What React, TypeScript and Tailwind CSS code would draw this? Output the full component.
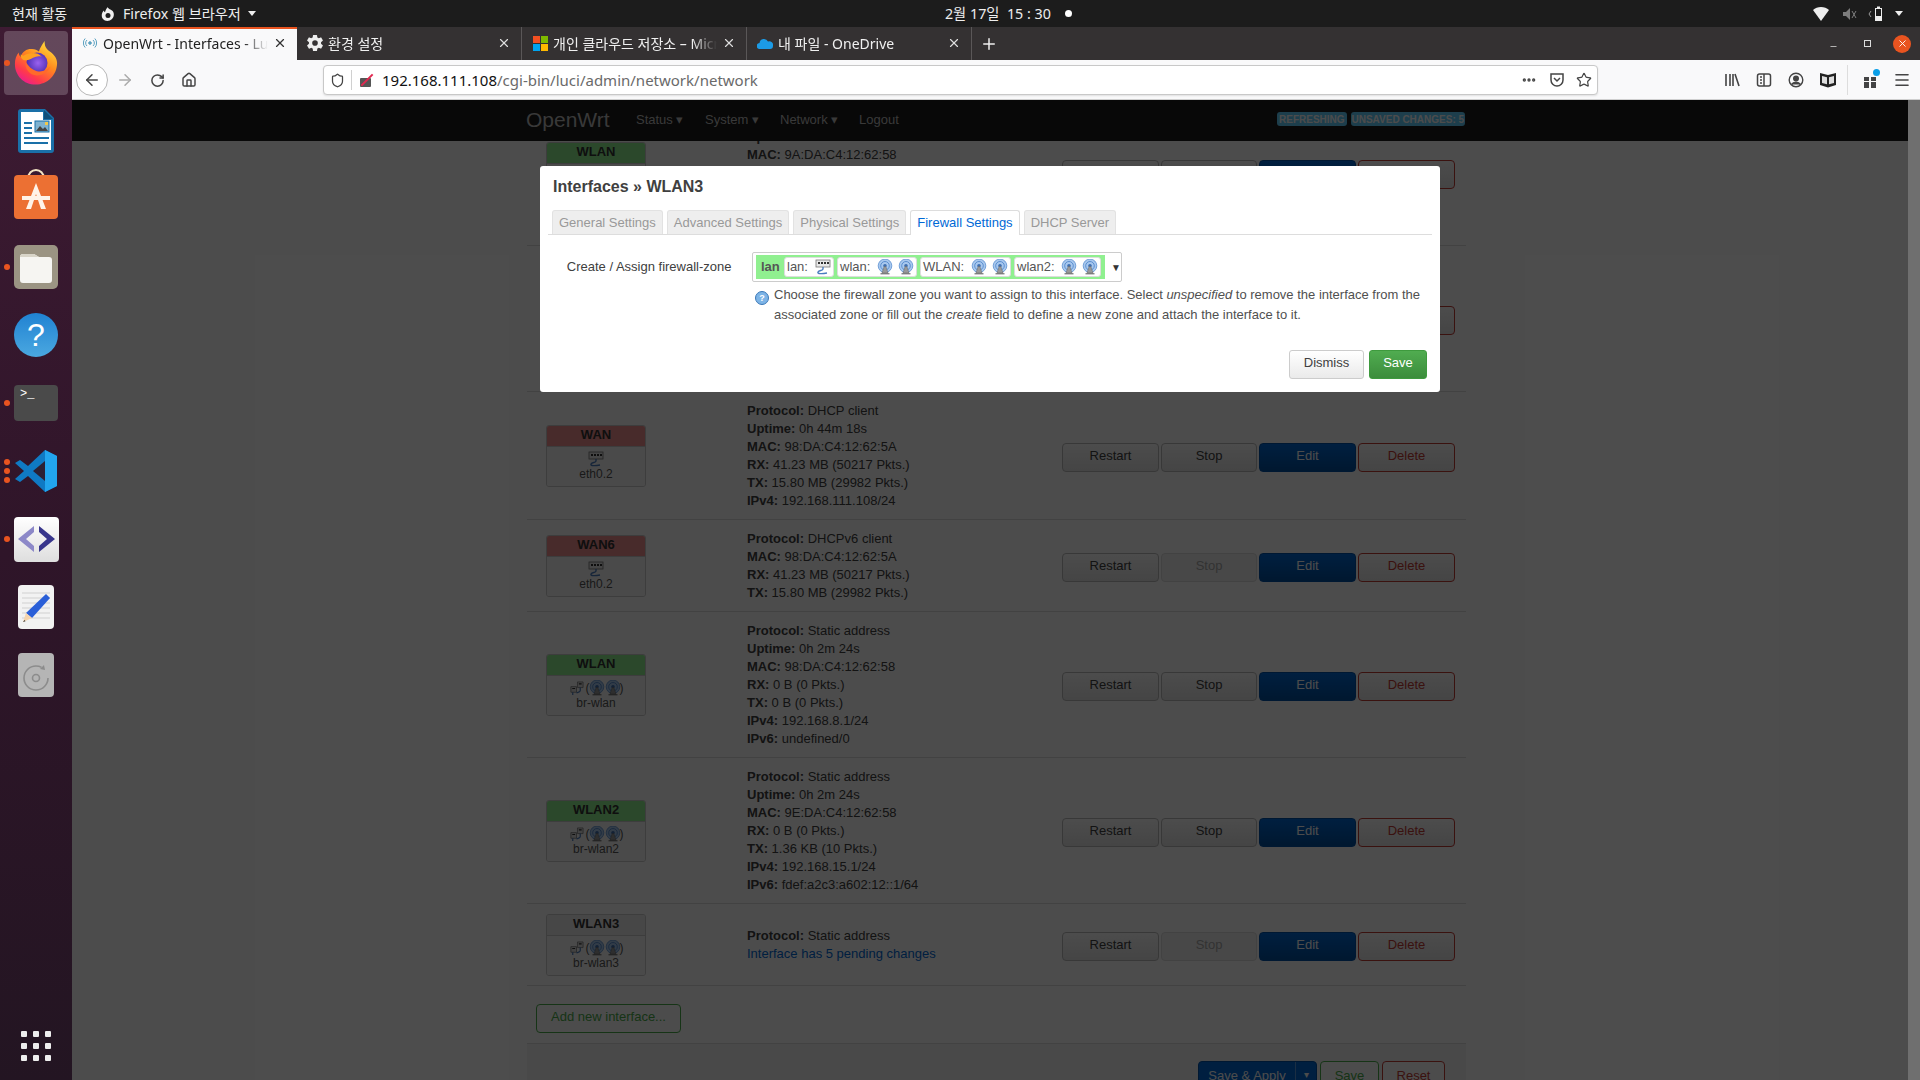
import React from 'react';
import {
  ArrowLeft,
  ArrowRight,
  RotateCw,
  House,
  Shield,
  Star,
  Ellipsis,
  Menu,
  X,
  Plus,
  Minus,
} from 'lucide-react';
import { IoSettingsSharp } from 'react-icons/io5';

const chromeFont = 'font-["Noto_Sans","Noto_Sans_CJK_KR",sans-serif]';

/* ---------- small LuCI icons ---------- */
const EthIcon = () => (
  <svg width="16" height="16" viewBox="0 0 16 16" className="shrink-0">
    <rect x="1" y="1" width="14" height="7" fill="#e8e8e8" stroke="#777" strokeWidth="0.8" />
    <path d="M3 3h2v2H3zM6 3h2v2H6zM9 3h2v2H9zM12 3h2v2h-2z" fill="#333" />
    <path d="M8 8v2c0 2-4 1-5 3s4 2 9 1" fill="none" stroke="#4a7cc0" strokeWidth="1.4" />
  </svg>
);

const WifiIcon = () => (
  <svg width="16" height="16" viewBox="0 0 16 16" className="shrink-0">
    <circle cx="8" cy="6.8" r="6.800" fill="#a8c8ee" stroke="#5b8fd0" strokeWidth="0.8" />
    <circle cx="8" cy="6.800" r="4.300" fill="none" stroke="#5b8fd0" strokeWidth="1" />
    <circle cx="8" cy="6.800" r="1.800" fill="#3f6fb0" />
    <path d="M7.200 7.500L5 14h6L8.800 7.500z" fill="#999" stroke="#666" strokeWidth="0.5" />
    <path d="M3.500 14.800h9" stroke="#555" strokeWidth="1" />
  </svg>
);

const BridgeIcon = () => (
  <svg width="15" height="15" viewBox="0 0 16 16" className="shrink-0">
    <path d="M9 1h6v6H9z" fill="#ddd" stroke="#777" strokeWidth="0.8" />
    <path d="M2 6h6v6H2z" fill="#ddd" stroke="#777" strokeWidth="0.8" />
    <path d="M4 12v3M12 7v3c0 2-3 2-4 3" fill="none" stroke="#4a7cc0" strokeWidth="1.3" />
    <path d="M10.500 3h3M3.500 8h3" stroke="#333" strokeWidth="1.2" />
  </svg>
);

/* ---------- dock icons ---------- */
const FirefoxIcon = () => (
  <svg width="46" height="46" viewBox="0 0 48 48">
    <defs>
      <linearGradient id="ffa" x1="0.8" y1="0.05" x2="0.2" y2="1">
        <stop offset="0" stopColor="#ffdb3a" />
        <stop offset="0.4" stopColor="#ff8a1e" />
        <stop offset="0.75" stopColor="#ff3a4a" />
        <stop offset="1" stopColor="#e8189a" />
      </linearGradient>
      <radialGradient id="ffb" cx="0.55" cy="0.5" r="0.55">
        <stop offset="0" stopColor="#9a62f0" />
        <stop offset="1" stopColor="#4b2db0" />
      </radialGradient>
    </defs>
    <path
      d="M46 24c0 12.500-10 22.500-22.500 22.500C11 46.500 2 37 2 25 2 20 3.500 16 6 13c0 2 .8 3.500 2 4.500C10 11.500 15 9 20 9.500c3 .3 5 1 7 2.500C28 8 31 4 33 1c0 5 1 7 4 10 5 3.500 9 7.500 9 13z"
      fill="url(#ffa)"
    />
    <circle cx="25" cy="24" r="11" fill="url(#ffb)" />
    <path d="M8 15c0 4 2 6 5 6 3 .3 5-1 8-2.500 3-1.500 6-2 9-1-3-3-6-4-10-3.800-4 .3-7 1-9 2.800z" fill="#ffa01f" />
    <path d="M13 22c-1 8 4 15 12 15 6 0 11-3 14-9-4 4-9 5.500-14 4.500-5-1-9-5-12-10.500z" fill="#ff6a2a" />
  </svg>
);

const WriterIcon = () => (
  <svg width="36" height="44" viewBox="0 0 36 44">
    <path d="M3 0h24l9 9v32a3 3 0 0 1-3 3H3a3 3 0 0 1-3-3V3a3 3 0 0 1 3-3z" fill="#1a70a8" />
    <path d="M3 3h22v8h8v30H3z" fill="#fff" />
    <path d="M26 1l9 9h-9z" fill="#0f4f7a" />
    <path d="M6 13h8v2H6zM6 18h8v2H6zM6 23h8v2H6zM6 28h25v2H6zM6 33h24v2H6z" fill="#1a70a8" />
    <rect x="17" y="12" width="14" height="11" fill="#7fb2d0" stroke="#1a70a8" />
    <path d="M18 22l4-5 3 3 2-2 3 4z" fill="#444" />
    <rect x="27" y="13" width="3" height="3" fill="#f2c94c" />
  </svg>
);

const StoreIcon = () => (
  <svg width="44" height="52" viewBox="0 0 44 52" className="-mt-[12px]">
    <path d="M14 12c0-12 16-12 16 0" fill="none" stroke="#f3e4c4" strokeWidth="2" />
    <rect x="0" y="8" width="44" height="44" rx="4" fill="#ec7033" />
    <path d="M22 16l-10 26h5l5-15 5 15h5z" fill="#fff3e8" />
    <rect x="8" y="29" width="28" height="4" fill="#fff3e8" />
  </svg>
);

const FilesIcon = () => (
  <svg width="44" height="44" viewBox="0 0 44 44">
    <rect width="44" height="44" rx="5" fill="#9b9483" />
    <path d="M6 12a3 3 0 0 1 3-3h11l5 3h10a3 3 0 0 1 3 3v20a3 3 0 0 1-3 3H9a3 3 0 0 1-3-3z" fill="#f6f5f2" />
    <path d="M6 12a3 3 0 0 1 3-3h11l5 3z" fill="#d8d4c8" />
  </svg>
);

const HelpIcon = () => (
  <div className="flex h-[44px] w-[44px] items-center justify-center rounded-full bg-gradient-to-b from-[#1f82d2] to-[#4aa8e0] font-['Liberation_Sans',sans-serif] text-[32px] text-white">
    ?
  </div>
);

const TerminalIcon = () => (
  <div className="relative h-[36px] w-[44px] rounded-[4px] bg-[#4a4a4a]">
    <span className="absolute left-[6px] top-[1px] font-['Liberation_Mono',monospace] text-[12px] leading-[16px] text-white">
      &gt;_
    </span>
  </div>
);

const VSCodeIcon = () => (
  <svg width="42" height="42" viewBox="0 0 42 42">
    <path d="M30 0l12 6v30l-12 6-17-16-8 6-5-3 9-8-9-8 5-3 8 6z" fill="#0f7ac4" />
    <path d="M30 0l12 6v30l-12 6z" fill="#22a5ee" />
    <path d="M30 11v20l-12-10z" fill="#2c2033" />
  </svg>
);

const CodeTileIcon = () => (
  <div className="flex h-[45px] w-[45px] items-center justify-center rounded-[4px] bg-gradient-to-b from-white to-[#dedede]">
    <svg width="37" height="26" viewBox="0 0 37 26">
      <path d="M16 0L0 13l16 13v-6L8 13l8-7z" fill="#8c88c8" />
      <path d="M21 0l16 13-16 13v-6l8-7-8-7z" fill="#38368c" />
    </svg>
  </div>
);

const EditIcon = () => (
  <svg width="36" height="44" viewBox="0 0 36 44">
    <rect width="36" height="44" rx="4" fill="#f2f2f2" />
    <path d="M4 8h28M4 13h28M4 18h28M4 23h28M4 28h28M4 33h28" stroke="#d0d0d0" strokeWidth="1" />
    <path d="M28 9l4 4-18 20-6-5z" fill="#2a5fd8" />
    <path d="M8 28l6 5-9 4z" fill="#f4d4ae" />
    <path d="M6.500 35l-1.500 2 2.500-.8z" fill="#333" />
  </svg>
);

const DiskIcon = () => (
  <svg width="36" height="44" viewBox="0 0 36 44">
    <rect width="36" height="44" rx="4" fill="#b5b5b5" />
    <circle cx="18" cy="25" r="12" fill="none" stroke="#8c8c8c" strokeWidth="1.6" strokeDasharray="62 14" />
    <circle cx="18" cy="25" r="3.500" fill="none" stroke="#8c8c8c" strokeWidth="1.6" />
    <path d="M26 12l1 5-5-1z" fill="#8c8c8c" />
  </svg>
);

const dockItems = [
  { icon: <FirefoxIcon />, dots: 1, active: true },
  { icon: <WriterIcon />, dots: 0 },
  { icon: <StoreIcon />, dots: 0 },
  { icon: <FilesIcon />, dots: 1 },
  { icon: <HelpIcon />, dots: 0 },
  { icon: <TerminalIcon />, dots: 1 },
  { icon: <VSCodeIcon />, dots: 3 },
  { icon: <CodeTileIcon />, dots: 1 },
  { icon: <EditIcon />, dots: 0 },
  { icon: <DiskIcon />, dots: 0 },
];

const Dock = () => (
  <aside className="flex w-[72px] shrink-0 flex-col bg-gradient-to-b from-[#3e1b33] via-[#2f1529] to-[#231522] pt-[2px]">
    {dockItems.map((item, i) => (
      <div key={i} className="relative flex h-[68px] items-center justify-center">
        {item.active && <div className="absolute inset-x-[4px] inset-y-[2px] rounded-[4px] bg-white/20" />}
        <div className="relative flex items-center justify-center">{item.icon}</div>
        {item.dots > 0 && (
          <div className="absolute left-[4px] top-0 flex h-full flex-col justify-center gap-[3px]">
            {Array.from({ length: item.dots }).map((_, d) => (
              <span key={d} className="h-[6px] w-[6px] rounded-full bg-[#e95420]" />
            ))}
          </div>
        )}
      </div>
    ))}
    <div className="mt-auto mb-[19px] ml-[21px] grid w-[30px] grid-cols-3 gap-[6px]">
      {Array.from({ length: 9 }).map((_, i) => (
        <span key={i} className="h-[6px] w-[6px] rounded-[1px] bg-[#eeeeee]" />
      ))}
    </div>
  </aside>
);

/* ---------- gnome top bar ---------- */
const TopBar = () => (
  <header className={`flex h-[27px] items-center bg-[#1c1c1c] text-[14px] text-[#eeeeee] ${chromeFont}`}>
    <span className="ml-[12px] w-[88px]">현재 활동</span>
    <svg width="16" height="16" viewBox="0 0 16 16" className="mr-[7px]">
      <path d="M8 1c-.5 1.500 2 2 4 3.500 2.500 2 2.500 6 0 8.500S5 15.500 3 13 1.500 6.500 4 4.500c0 1 .5 1.500 1 1.800C5.500 4 6.500 2 8 1z" fill="#eee" />
      <circle cx="8" cy="9.500" r="2.500" fill="#1c1c1c" />
    </svg>
    <span className="text-[14.200px]">Firefox 웹 브라우저</span>
    <span className="ml-[7px] h-0 w-0 border-x-[4px] border-t-[5px] border-x-transparent border-t-[#eeeeee]" />
    <div className="ml-[689px] flex items-center">
      <span className="text-[14.300px]">2월 17일&nbsp;&nbsp;15 : 30</span>
      <span className="ml-[14px] h-[7px] w-[7px] rounded-full bg-white" />
    </div>
    <div className="ml-auto mr-[17px] flex items-center">
      <svg width="16" height="16" viewBox="0 0 16 16">
        <path d="M0 4c4-4 12-4 16 0L8 15z" fill="#eee" />
      </svg>
      <svg width="16" height="16" viewBox="0 0 16 16" className="ml-[12px] opacity-50">
        <path d="M2 6h3l4-4v12l-4-4H2z" fill="#ddd" />
        <path d="M11 5l4 7M11 12l4-7" stroke="#ddd" strokeWidth="1" />
      </svg>
      <svg width="20" height="16" viewBox="0 0 20 16" className="ml-[11px]">
        <path d="M3 5l-2 3 2 3" fill="none" stroke="#999" strokeWidth="1" />
        <rect x="7" y="2" width="7" height="13" fill="#eee" />
        <rect x="9" y="0.500" width="3" height="2" fill="#eee" />
        <rect x="8" y="3" width="5" height="7" fill="#1c1c1c" />
      </svg>
      <span className="ml-[7px] h-0 w-0 border-x-[4px] border-t-[5px] border-x-transparent border-t-[#eeeeee]" />
    </div>
  </header>
);

/* ---------- firefox chrome ---------- */
const OpenWrtFavicon = () => (
  <svg width="14" height="14" viewBox="0 0 14 14" fill="none" stroke="#5aa0c0" strokeWidth="1">
    <circle cx="7" cy="7" r="1.300" fill="#5aa0c0" />
    <path d="M4 4a4 4 0 0 0 0 6M10 4a4 4 0 0 1 0 6M2.200 2.500a6.500 6.500 0 0 0 0 9M11.800 2.500a6.500 6.500 0 0 1 0 9" />
  </svg>
);

const MsLogo = () => (
  <span className="grid h-[15px] w-[15px] shrink-0 grid-cols-2 gap-[1px]">
    <span className="bg-[#f25022]" />
    <span className="bg-[#7fba00]" />
    <span className="bg-[#00a4ef]" />
    <span className="bg-[#ffb900]" />
  </span>
);

const OneDriveLogo = () => (
  <svg width="16" height="11" viewBox="0 0 16 11" className="shrink-0">
    <path d="M3 11a3 3 0 0 1-.5-6A4.500 4.500 0 0 1 11 3.500 3.800 3.800 0 0 1 16 8c0 2-1 3-3 3z" fill="#1c9be6" />
  </svg>
);

const tabs = [
  { title: 'OpenWrt - Interfaces - LuCI', icon: <OpenWrtFavicon />, active: true },
  { title: '환경 설정', icon: <IoSettingsSharp size={18} className="shrink-0 text-[#eee]" /> },
  { title: '개인 클라우드 저장소 – Microsoft', icon: <MsLogo /> },
  { title: '내 파일 - OneDrive', icon: <OneDriveLogo /> },
];

const TabStrip = () => (
  <div className={`flex h-[33px] items-stretch bg-[#343132] text-[14px] text-[#f0f0f0] ${chromeFont}`}>
    {tabs.map((t) => (
      <div
        key={t.title}
        className={`flex w-[225px] items-center gap-[5px] pl-[10px] pr-[10px] ${
          t.active ? 'border-t-2 border-[#e95420] bg-[#f9f9fa] pb-[3px] text-[#222222]' : 'border-r border-[#5a5758] pb-[1px]'
        }`}
      >
        <span className="flex w-[16px] shrink-0 justify-center">{t.icon}</span>
        <span className="min-w-0 flex-1 overflow-hidden whitespace-nowrap [mask-image:linear-gradient(to_right,black_85%,transparent)]">
          {t.title}
        </span>
        <X size={14} className={t.active ? 'text-[#333]' : 'text-[#ddd]'} />
      </div>
    ))}
    <div className="flex w-[34px] items-center justify-center">
      <Plus size={18} className="text-[#eee]" />
    </div>
    <div className="ml-auto mr-[9px] flex items-center">
      <Minus size={9} className="mr-[26px] mt-[6px] text-[#ddd]" />
      <span className="relative mr-[22px] h-[7px] w-[7px] border border-[#ddd]" />
      <span className="flex h-[18px] w-[18px] items-center justify-center rounded-full bg-[#e95420]">
        <X size={11} className="text-white" />
      </span>
    </div>
  </div>
);

const Toolbar = () => (
  <div className={`flex h-[40px] items-center border-b border-[#cfcfcf] bg-[#f9f9fa] pt-[1px] text-[#444] ${chromeFont}`}>
    <div className="ml-[4px] flex h-[32px] w-[32px] items-center justify-center rounded-full border border-[#b8b8b8] bg-white">
      <ArrowLeft size={18} />
    </div>
    <div className="ml-[1px] flex w-[32px] justify-center text-[#aaaaaa]">
      <ArrowRight size={18} />
    </div>
    <div className="flex w-[32px] justify-center">
      <RotateCw size={15} strokeWidth={2.4} />
    </div>
    <div className="flex w-[32px] justify-center">
      <House size={16} strokeWidth={2.2} />
    </div>
    <div className="ml-[118px] flex h-[30px] w-[1275px] items-center rounded-[4px] border border-[#c8c8c8] bg-white shadow-[0_1px_2px_rgba(0,0,0,0.1)]">
      <Shield size={15} className="ml-[6px] shrink-0" strokeWidth={2} />
      <span className="ml-[6px] h-[20px] w-px bg-[#d0d0d0]" />
      <span className="relative ml-[8px] h-[14px] w-[13px]">
        <span className="absolute bottom-0 h-[9px] w-[11px] rounded-[1px] bg-[#555]" />
        <span className="absolute left-[-1px] top-[6px] h-[2px] w-[16px] -rotate-45 bg-[#e22850]" />
      </span>
      <span className="ml-[9px] whitespace-nowrap text-[15px] text-[#111111]">
        192.168.111.108<span className="text-[#6a6a6a]">/cgi-bin/luci/admin/network/network</span>
      </span>
      <Ellipsis size={16} className="ml-auto text-[#444]" strokeWidth={3} />
      <svg width="16" height="16" viewBox="0 0 16 16" className="ml-[12px]" fill="none" stroke="#444" strokeWidth="1.5">
        <path d="M2 2h12v6a6 6 0 0 1-12 0z" />
        <path d="M5 6l3 3 3-3" />
      </svg>
      <Star size={16} className="ml-[11px] mr-[5px] text-[#444]" strokeWidth={1.8} />
    </div>
    <div className="ml-[126px] flex items-center gap-[16px]">
      <svg width="16" height="16" viewBox="0 0 16 16" stroke="#444" strokeWidth="1.6" fill="none">
        <path d="M2 2v12M6 2v12M9 2v12M11 2l4 12" />
      </svg>
      <svg width="16" height="16" viewBox="0 0 16 16" stroke="#444" strokeWidth="1.5" fill="none">
        <rect x="1.500" y="2" width="13" height="12" rx="2" />
        <path d="M4 5h2M4 8h2M4 11h2M8 2v12" />
      </svg>
      <svg width="16" height="16" viewBox="0 0 16 16" stroke="#444" strokeWidth="1.4" fill="none">
        <circle cx="8" cy="8" r="6.800" />
        <circle cx="8" cy="6.500" r="2.300" fill="#444" />
        <path d="M3.500 12.500c2-3 7-3 9 0" fill="#444" />
      </svg>
      <svg width="16" height="16" viewBox="0 0 16 16">
        <path d="M0 1l8 2 8-2v12l-8 2.500L0 13z" fill="#222" />
        <path d="M2 4l5 1.300v7L2 11zM14 4l-5 1.300v7l5-1.300z" fill="#ddd" />
      </svg>
    </div>
    <span className="ml-[11px] h-[30px] w-px bg-[#dddddd]" />
    <div className="relative ml-[14px]">
      <svg width="16" height="16" viewBox="0 0 16 16" fill="#444">
        <rect x="2" y="5" width="5" height="4" />
        <rect x="9" y="5" width="5" height="4" />
        <rect x="2" y="10" width="5" height="6" />
        <rect x="9" y="10" width="5" height="6" />
      </svg>
      <span className="absolute right-[-2px] top-[-3px] h-[7px] w-[7px] rounded-full bg-[#0a9fe8]" />
    </div>
    <Menu size={18} className="ml-[15px] text-[#444]" strokeWidth={2.2} />
  </div>
);

/* ---------- LuCI page ---------- */
type Row = {
  name: string;
  color: string;
  dev: string;
  kind: 'eth' | 'bridge';
  stopDisabled?: boolean;
  info: [string, string][];
  pending?: boolean;
};

const rows: Row[] = [
  {
    name: 'WLAN',
    color: 'bg-[#90f090]',
    dev: 'br-lan',
    kind: 'bridge',
    info: [
      ['Protocol', 'Static address'],
      ['Uptime', '0h 2m 24s'],
      ['MAC', '9A:DA:C4:12:62:58'],
      ['RX', '0 B (0 Pkts.)'],
      ['TX', '0 B (0 Pkts.)'],
      ['IPv4', '192.168.1.1/24'],
      ['IPv6', 'undefined/0'],
    ],
  },
  {
    name: 'LAN',
    color: 'bg-[#90f090]',
    dev: 'br-lan',
    kind: 'bridge',
    info: [
      ['Protocol', 'Static address'],
      ['Uptime', '0h 44m 20s'],
      ['MAC', '98:DA:C4:12:62:58'],
      ['RX', '0 B (0 Pkts.)'],
      ['TX', '0 B (0 Pkts.)'],
      ['IPv4', '192.168.1.1/24'],
      ['IPv6', 'undefined/0'],
    ],
  },
  {
    name: 'WAN',
    color: 'bg-[#f09090]',
    dev: 'eth0.2',
    kind: 'eth',
    info: [
      ['Protocol', 'DHCP client'],
      ['Uptime', '0h 44m 18s'],
      ['MAC', '98:DA:C4:12:62:5A'],
      ['RX', '41.23 MB (50217 Pkts.)'],
      ['TX', '15.80 MB (29982 Pkts.)'],
      ['IPv4', '192.168.111.108/24'],
    ],
  },
  {
    name: 'WAN6',
    color: 'bg-[#f09090]',
    dev: 'eth0.2',
    kind: 'eth',
    stopDisabled: true,
    info: [
      ['Protocol', 'DHCPv6 client'],
      ['MAC', '98:DA:C4:12:62:5A'],
      ['RX', '41.23 MB (50217 Pkts.)'],
      ['TX', '15.80 MB (29982 Pkts.)'],
    ],
  },
  {
    name: 'WLAN',
    color: 'bg-[#90f090]',
    dev: 'br-wlan',
    kind: 'bridge',
    info: [
      ['Protocol', 'Static address'],
      ['Uptime', '0h 2m 24s'],
      ['MAC', '98:DA:C4:12:62:58'],
      ['RX', '0 B (0 Pkts.)'],
      ['TX', '0 B (0 Pkts.)'],
      ['IPv4', '192.168.8.1/24'],
      ['IPv6', 'undefined/0'],
    ],
  },
  {
    name: 'WLAN2',
    color: 'bg-[#90f090]',
    dev: 'br-wlan2',
    kind: 'bridge',
    info: [
      ['Protocol', 'Static address'],
      ['Uptime', '0h 2m 24s'],
      ['MAC', '9E:DA:C4:12:62:58'],
      ['RX', '0 B (0 Pkts.)'],
      ['TX', '1.36 KB (10 Pkts.)'],
      ['IPv4', '192.168.15.1/24'],
      ['IPv6', 'fdef:a2c3:a602:12::1/64'],
    ],
  },
  {
    name: 'WLAN3',
    color: 'bg-[#eeeeee]',
    dev: 'br-wlan3',
    kind: 'bridge',
    stopDisabled: true,
    pending: true,
    info: [['Protocol', 'Static address']],
  },
];

const RowButton = ({
  label,
  className,
  w = 'w-[97px]',
}: {
  label: string;
  className: string;
  w?: string;
}) => (
  <div className={`flex h-[29px] items-center justify-center rounded-[4px] border pb-[4px] ${w} ${className}`}>
    {label}
  </div>
);

const greyBtn = 'border-[#bbbbbb] bg-gradient-to-b from-white to-[#e6e6e6] text-[#404040]';

const InterfaceRow = ({ row }: { row: Row }) => (
  <div className="flex items-center border-b border-[#dddddd] pb-[9px] pl-[19px] pt-[10px]">
    <div className="flex h-[62px] w-[100px] shrink-0 flex-col overflow-hidden rounded-[3px] border border-[#cccccc] text-center">
      <div className={`h-[21px] border-b border-[#cccccc] font-bold leading-[18px] text-[#333333] ${row.color}`}>{row.name}</div>
      <div className="flex flex-1 flex-col items-center bg-[#f9f9f9] pt-[4px] text-[12px] leading-[15px] text-[#555555]">
        {row.kind === 'eth' ? (
          <EthIcon />
        ) : (
          <div className="flex h-[16px] items-center">
            <BridgeIcon />
            <span className="ml-[2px]">(</span>
            <span className="-mx-[1px] flex">
              <WifiIcon />
              <WifiIcon />
            </span>
            <span>)</span>
          </div>
        )}
        <span>{row.dev}</span>
      </div>
    </div>
    <div className="ml-[101px] w-[315px] shrink-0 leading-[18px] text-[#404040]">
      {row.info.map(([k, v]) => (
        <div key={k}>
          <b>{k}:</b> {v}
        </div>
      ))}
      {row.pending && <div className="text-[#0069d6]">Interface has 5 pending changes</div>}
    </div>
    <div className="mt-[3px] flex gap-[2px]">
      <RowButton label="Restart" className={greyBtn} />
      <RowButton
        label="Stop"
        w="w-[96px]"
        className={row.stopDisabled ? 'border-[#dddddd] bg-[#f2f2f2] text-[#aaaaaa]' : greyBtn}
      />
      <RowButton label="Edit" className="border-[#0050a8] bg-gradient-to-b from-[#0069d6] to-[#00509f] text-white" />
      <RowButton label="Delete" className="border-[#c43c35] bg-gradient-to-b from-white to-[#e6e6e6] text-[#c43c35]" />
    </div>
  </div>
);

const OpenWrtNav = () => (
  <nav className="absolute inset-x-0 top-0 flex h-[41px] items-center bg-[#1c1c1c] pb-[1px] pl-[454px] font-['Liberation_Sans',sans-serif] text-[13px] text-[#bfbfbf]">
    <span className="w-[110px] text-[21px] font-light">OpenWrt</span>
    <span className="w-[69px]">Status ▾</span>
    <span className="w-[75px]">System ▾</span>
    <span className="w-[79px]">Network ▾</span>
    <span>Logout</span>
    <div className="ml-[378px] flex gap-[4px] self-start pt-[12px] text-[10px] font-bold">
      <span className="flex h-[14px] w-[70px] items-center justify-center rounded-[3px] bg-[#62d0ff] text-white">REFRESHING</span>
      <span className="flex h-[14px] w-[114px] items-center justify-center rounded-[3px] bg-[#62d0ff] text-white">UNSAVED CHANGES: 5</span>
    </div>
  </nav>
);

const ZonePill = ({ label, w, children }: { label: string; w: string; children: React.ReactNode }) => (
  <span className={`flex h-[20px] items-center justify-between rounded-[3px] border border-[#dddddd] bg-white px-[2px] text-[#555555] ${w}`}>
    {label}
    <span className="flex gap-[5px]">{children}</span>
  </span>
);

const modalTabs = ['General Settings', 'Advanced Settings', 'Physical Settings', 'Firewall Settings', 'DHCP Server'];

const Modal = () => (
  <div className="absolute left-[468px] top-[66px] flex h-[226px] w-[900px] flex-col rounded-[3px] bg-white px-[8px] pt-[11px] font-['Liberation_Sans',sans-serif] text-[13px] text-[#404040]">
    <h4 className="ml-[5px] text-[16px] font-bold leading-[20px]">Interfaces » WLAN3</h4>
    <div className="mt-[13px] flex h-[25px] gap-[4px] border-b border-[#dddddd] pl-[4px]">
      {modalTabs.map((t) => (
        <div
          key={t}
          className={
            t === 'Firewall Settings'
              ? 'h-[25px] rounded-t-[3px] border border-b-0 border-[#dddddd] bg-white px-[6px] pt-[2px] text-[#0069d6]'
              : 'h-[24px] rounded-t-[3px] border border-b-0 border-[#e2e2e2] bg-[#eeeeee] px-[6px] pt-[2px] text-[#999999]'
          }
        >
          {t}
        </div>
      ))}
    </div>
    <div className="mt-[18px] flex">
      <div className="w-[186px] pt-[4px] text-right text-[#404040]">Create / Assign firewall-zone</div>
      <div className="ml-[20.500px] flex-1">
        <div className="-mt-[1px] flex h-[30px] w-[370px] items-center rounded-[2px] border border-[#cccccc] bg-white pl-[3px]">
          <div className="flex h-[24px] w-[351px] items-center gap-[3px] bg-[#90f090] pl-[5px] pr-[3px]">
            <b className="w-[20px] text-[#555555]">lan</b>
            <ZonePill label="lan:" w="w-[50px]">
              <EthIcon />
            </ZonePill>
            <ZonePill label="wlan:" w="w-[80px]">
              <WifiIcon />
              <WifiIcon />
            </ZonePill>
            <ZonePill label="WLAN:" w="w-[91px]">
              <WifiIcon />
              <WifiIcon />
            </ZonePill>
            <ZonePill label="wlan2:" w="w-[87px]">
              <WifiIcon />
              <WifiIcon />
            </ZonePill>
          </div>
          <span className="ml-[6px] text-[10px] text-[#333333]">▼</span>
        </div>
        <div className="mt-[3px] flex w-[680px] text-[#505050]">
          <span className="ml-[3px] mt-[6px] flex h-[14px] w-[14px] shrink-0 items-center justify-center rounded-full border border-[#3a78b8] bg-[#7db4e6] text-[9px] font-bold leading-none text-white">
            ?
          </span>
          <p className="ml-[5px] leading-[20px]">
            Choose the firewall zone you want to assign to this interface. Select <i>unspecified</i> to remove the
            interface from the associated zone or fill out the <i>create</i> field to define a new zone and attach the
            interface to it.
          </p>
        </div>
      </div>
    </div>
    <div className="absolute right-[13px] top-[184px] flex gap-[5px]">
      <div className="flex h-[29px] w-[75px] items-center justify-center rounded-[3px] border border-[#cccccc] bg-gradient-to-b from-white to-[#eaeaea] pb-[3px] text-[#404040]">
        Dismiss
      </div>
      <div className="flex h-[29px] w-[58px] items-center justify-center rounded-[3px] border border-[#3e9a3e] bg-gradient-to-b from-[#50ac50] to-[#3c8d3c] pb-[3px] text-white">
        Save
      </div>
    </div>
  </div>
);

const Page = () => (
  <div className="relative h-[980px] flex-1 overflow-hidden bg-white font-['Liberation_Sans',sans-serif] text-[13px]">
    <div className="ml-[455px] w-[939px]">
      {rows.map((r, i) => (
        <InterfaceRow key={i} row={r} />
      ))}
      <div className="pl-[9px] pt-[18px]">
        <RowButton label="Add new interface..." w="w-[145px]" className="border-[#4cae4c] bg-white text-[#4cae4c]" />
      </div>
      <div className="mt-[10px] flex h-[60px] justify-end gap-[3px] border-t border-[#dddddd] bg-[#f5f5f5] pr-[21px] pt-[17px]">
        <div className="flex h-[40px] w-[119px] rounded-[4px] border border-[#0050a8] bg-[#0069d6] text-white">
          <span className="flex-1 pt-[4px] text-center">Save &amp; Apply</span>
          <span className="w-[21px] border-l border-[#5a9be0] pt-[5px] text-center text-[10px]">▾</span>
        </div>
        <div className="h-[40px] w-[59px] rounded-[4px] border border-[#4cae4c] bg-white pt-[4px] text-center text-[#4cae4c]">Save</div>
        <div className="h-[40px] w-[63px] rounded-[4px] border border-[#c43c35] bg-white pt-[4px] text-center text-[#c43c35]">Reset</div>
      </div>
    </div>
    <OpenWrtNav />
    <div className="absolute inset-0 bg-black/70" />
    <Modal />
  </div>
);

export default function App() {
  return (
    <div className="flex h-[1080px] w-[1920px] flex-col overflow-hidden bg-black">
      <TopBar />
      <div className="flex flex-1">
        <Dock />
        <div className="flex flex-1 flex-col">
          <TabStrip />
          <Toolbar />
          <div className="flex flex-1">
            <Page />
            <div className="w-[12px] bg-[#6f6f6f]" />
          </div>
        </div>
      </div>
    </div>
  );
}
